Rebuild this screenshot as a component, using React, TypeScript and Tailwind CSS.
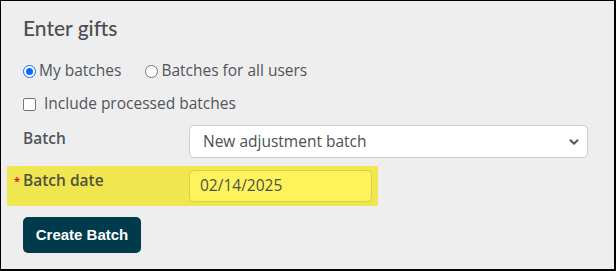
import { ChevronDown } from "lucide-react";

export default function App() {
  return (
    <div className="w-[616px] h-[271px] box-border border-t border-l border-r-2 border-b-2 border-black bg-[#eeeeee] font-['Open_Sans',sans-serif] text-[#555555] overflow-hidden">
      <div className="pl-[22px] pt-[13px]">
        <h1 className="text-[21px] leading-[28px] text-[#4a4f54] font-['Lato',sans-serif] font-medium">Enter gifts</h1>

        <div className="mt-[18px] flex items-center h-[22px] text-[15.5px]">
          <span className="w-[13px] h-[13px] rounded-full border-[1.5px] border-[#0a6cff] bg-white flex items-center justify-center">
            <span className="w-[7px] h-[7px] rounded-full bg-[#0a6cff]" />
          </span>
          <span className="ml-[3px] text-[#50555b]">My batches</span>
          <span className="ml-[24px] w-[13px] h-[13px] rounded-full border border-[#767676] bg-white" />
          <span className="ml-[3px] text-[#50555b]">Batches for all users</span>
        </div>

        <div className="mt-[11px] flex items-center h-[22px] text-[15.5px]">
          <span className="w-[13px] h-[13px] rounded-[2px] border border-[#767676] bg-white" />
          <span className="ml-[8px] text-[#50555b]">Include processed batches</span>
        </div>
      </div>

      <div className="mt-[10px] flex items-start pl-[22px]">
        <span className="w-[166px] pt-[2px] text-[15.5px] font-semibold text-[#50555b]">Batch</span>
        <div className="w-[399px] h-[33px] bg-white border border-[#cccccc] rounded-[5px] flex items-center justify-between pl-[13px] pr-[6px]">
          <span className="text-[15.5px] text-[#4a4f54]">New adjustment batch</span>
          <ChevronDown size={14} strokeWidth={3.5} className="text-[#555a60]" />
        </div>
      </div>

      <div className="mt-[8px] ml-[6px] w-[371px] h-[40px] bg-[#f0e650] flex items-start">
        <span className="w-[16px] pt-[9px] text-right pr-[3px] text-[#e02020] text-[11px] font-bold leading-none">*</span>
        <span className="w-[166px] pt-[3px] text-[15.5px] font-semibold text-[#4f5340]">Batch date</span>
        <div className="mt-[4px] w-[183px] h-[32px] bg-[#fff35a] border border-[#d9cf4a] rounded-[5px] flex items-center pl-[10px]">
          <span className="text-[15.5px] text-[#4a4f54]">02/14/2025</span>
        </div>
      </div>

      <div className="pl-[22px] mt-[11px]">
        <button className="w-[118px] h-[36px] rounded-[5px] bg-[#003a4d] text-white text-[15px] font-bold font-['Liberation_Sans',Arial,sans-serif]">
          Create Batch
        </button>
      </div>
    </div>
  );
}
